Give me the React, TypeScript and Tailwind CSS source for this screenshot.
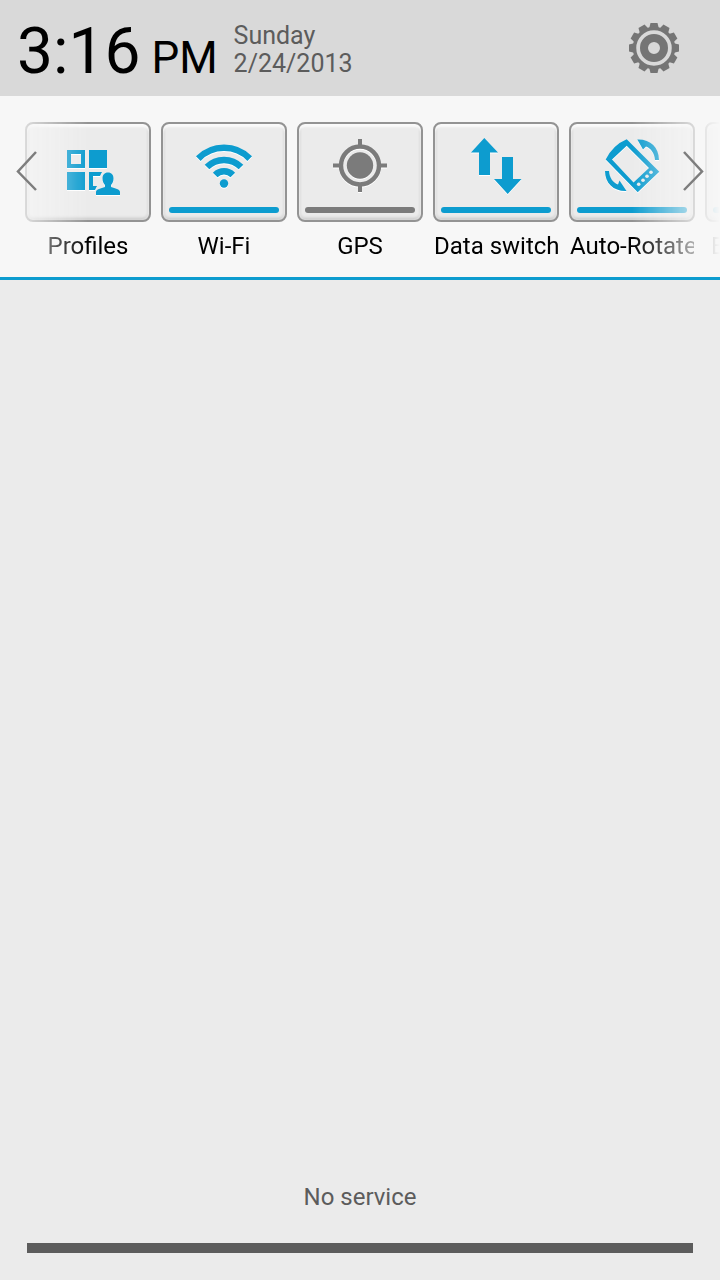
import type { ReactNode } from "react";

const WifiIcon = () => (
  <>
    <g fill="none" stroke="currentColor" strokeWidth="6.5">
      <path d="M6.3 22.6a36 36 0 0 1 51.4 0" />
      <path d="M15 31a24 24 0 0 1 34 0" />
      <path d="M23.2 39a12.4 12.4 0 0 1 17.6 0" />
    </g>
    <circle cx="32" cy="47.5" r="4.2" fill="currentColor" />
  </>
);

const ProfilesIcon = () => (
  <>
    <path
      fill="currentColor"
      fillRule="evenodd"
      d="M11 14h18v18H11zM15 18v10h10V18zM33 14h18v18H33zM11 36h18v18H11z"
    />
    <path fill="currentColor" d="M33 36h13l-2 4h-7v10h4l-2 4h-6z" />
    <path
      fill="currentColor"
      d="M52 36.5c3.5 0 5.5 2.5 5.5 6 0 3-1 5-2.5 6.5v2c4 1.5 9 2 9 5v3H40v-3c0-3 5-3.5 9-5v-2c-1.5-1.5-2.5-3.5-2.5-6.5 0-3.5 2-6 5.5-6z"
    />
  </>
);

const GpsIcon = () => (
  <>
    <circle cx="32" cy="29.5" r="19" fill="none" stroke="currentColor" strokeWidth="4.5" />
    <circle cx="32" cy="29.5" r="13.2" fill="currentColor" />
    <path stroke="currentColor" strokeWidth="4" d="M32 3v7M32 49v7M5 29.5h7M52 29.5h7" />
  </>
);

const DataIcon = () => (
  <path fill="currentColor" d="M20.3 2L34 16.5h-8V39H15V16.5H7zM38 21h11v22h8.5L43.7 58 30 43h8z" />
);

const RotateIcon = () => (
  <>
    <path
      fill="currentColor"
      fillRule="evenodd"
      d="M26.7 3.3L59.3 35.7 37.7 56.3 5.7 23.5Q13 9 26.7 3.3zM26.7 9.7L12 23.5 33.5 46.5 49 32z"
    />
    <g fill="#ebebeb">
      <circle cx="38.7" cy="48.3" r="1.8" />
      <circle cx="43" cy="44.3" r="1.8" />
      <circle cx="47" cy="40.3" r="1.8" />
      <circle cx="51" cy="36.3" r="1.8" />
    </g>
    <path fill="currentColor" d="M37.3 3.5C50 3 59 11 59 24h-4c-.5-7-4-11.5-9-13.5l-3 3z" />
    <path fill="currentColor" d="M26.5 55C14 55.5 5 47.5 5 35h4c.5 7 4 11.5 9 13.5l1.500-4z" />
  </>
);

type Toggle = {
  label: string;
  icon?: ReactNode;
  state?: "on" | "off";
};

const toggles: Toggle[] = [
  { label: "Profiles", icon: <ProfilesIcon /> },
  { label: "Wi-Fi", icon: <WifiIcon />, state: "on" },
  { label: "GPS", icon: <GpsIcon />, state: "off" },
  { label: "Data switch", icon: <DataIcon />, state: "on" },
  { label: "Auto-Rotate", icon: <RotateIcon />, state: "on" },
  { label: "Brightness", state: "on" },
];

const ToggleTile = ({ label, icon, state }: Toggle) => (
  <button className="w-[126px] shrink-0 text-black">
    <span className="flex h-[100px] flex-col items-center justify-between rounded-lg border-2 border-[#939393] bg-[#ebebeb] px-1.5 pt-3 pb-[7px] shadow-[inset_0_3px_2px_#fafafa,inset_2px_0_2px_#e0e0e0,inset_-2px_0_2px_#e0e0e0,inset_0_-2px_3px_#c4c4c4]">
      <svg
        viewBox="0 0 64 60"
        className={`h-[60px] w-16 drop-shadow-[0_1px_0_#ffffff] ${state === "off" ? "text-[#7b7b7b]" : "text-[#0d9ccf]"}`}
      >
        {icon}
      </svg>
      {state && (
        <span className={`h-1.5 w-full rounded-full ${state === "on" ? "bg-[#0d9ccf]" : "bg-[#7b7b7b]"}`} />
      )}
    </span>
    <span className="mx-px mt-2 flex overflow-hidden text-2xl whitespace-nowrap">
      <span className="mx-auto">{label}</span>
    </span>
  </button>
);

const teeth = [0, 30, 60, 90, 120, 150, 180, 210, 240, 270, 300, 330];

const GearIcon = () => (
  <svg viewBox="-26 -26 52 52" className="size-[52px] text-[#757575]">
    {teeth.map((angle) => (
      <path key={angle} fill="currentColor" transform={`rotate(${angle})`} d="M-5-19l1.500-6h7l1.500 6z" />
    ))}
    <circle r="19.5" fill="none" stroke="currentColor" strokeWidth="3.5" />
    <circle r="10" fill="none" stroke="currentColor" strokeWidth="8" />
  </svg>
);

const App = () => {
  return (
    <div className="flex min-h-screen flex-col bg-[#ebebeb] font-['Roboto','Liberation_Sans',sans-serif]">
      {/* Clock and date */}
      <header className="flex h-24 items-center bg-[#d9d9d9] pr-10 pl-[17px]">
        <div className="flex items-baseline gap-[11px] pt-2 text-black">
          <span className="text-[64px] leading-none">3:16</span>
          <span className="text-[44px] leading-none">PM</span>
        </div>
        <div className="ml-4 pt-1 text-[25px] leading-7 text-[#5c5c5c]">
          <div>Sunday</div>
          <div>2/24/2013</div>
        </div>
        <button aria-label="Settings" className="ml-auto">
          <GearIcon />
        </button>
      </header>

      {/* Quick toggles */}
      <section className="relative border-b-3 border-[#0d9ccf] bg-[#f7f7f7]">
        <div className="flex items-start gap-2.5 overflow-hidden pt-[26px] pb-[15px] pl-[25px] [mask-image:linear-gradient(to_right,transparent,black_88px,black_calc(100%-88px),transparent)]">
          {toggles.map((toggle) => (
            <ToggleTile key={toggle.label} {...toggle} />
          ))}
        </div>
        <button aria-label="Previous" className="absolute top-[55px] left-4">
          <svg viewBox="0 0 22 40" className="h-10 w-[22px]" fill="none" stroke="#7d7d7d" strokeWidth="2.5">
            <path d="M20 1L2 20.5 20 39" />
          </svg>
        </button>
        <button aria-label="Next" className="absolute top-[55px] right-4">
          <svg viewBox="0 0 22 40" className="h-10 w-[22px]" fill="none" stroke="#7d7d7d" strokeWidth="2.5">
            <path d="M2 1l18 19.500L2 39" />
          </svg>
        </button>
      </section>

      <main className="flex-1" />

      <footer className="px-[27px] pb-[27px] text-center text-2xl text-[#5c5c5c]">
        <p>No service</p>
        <div className="mt-[30px] h-2.5 bg-[#5c5c5c]" />
      </footer>
    </div>
  );
};

export default App;
